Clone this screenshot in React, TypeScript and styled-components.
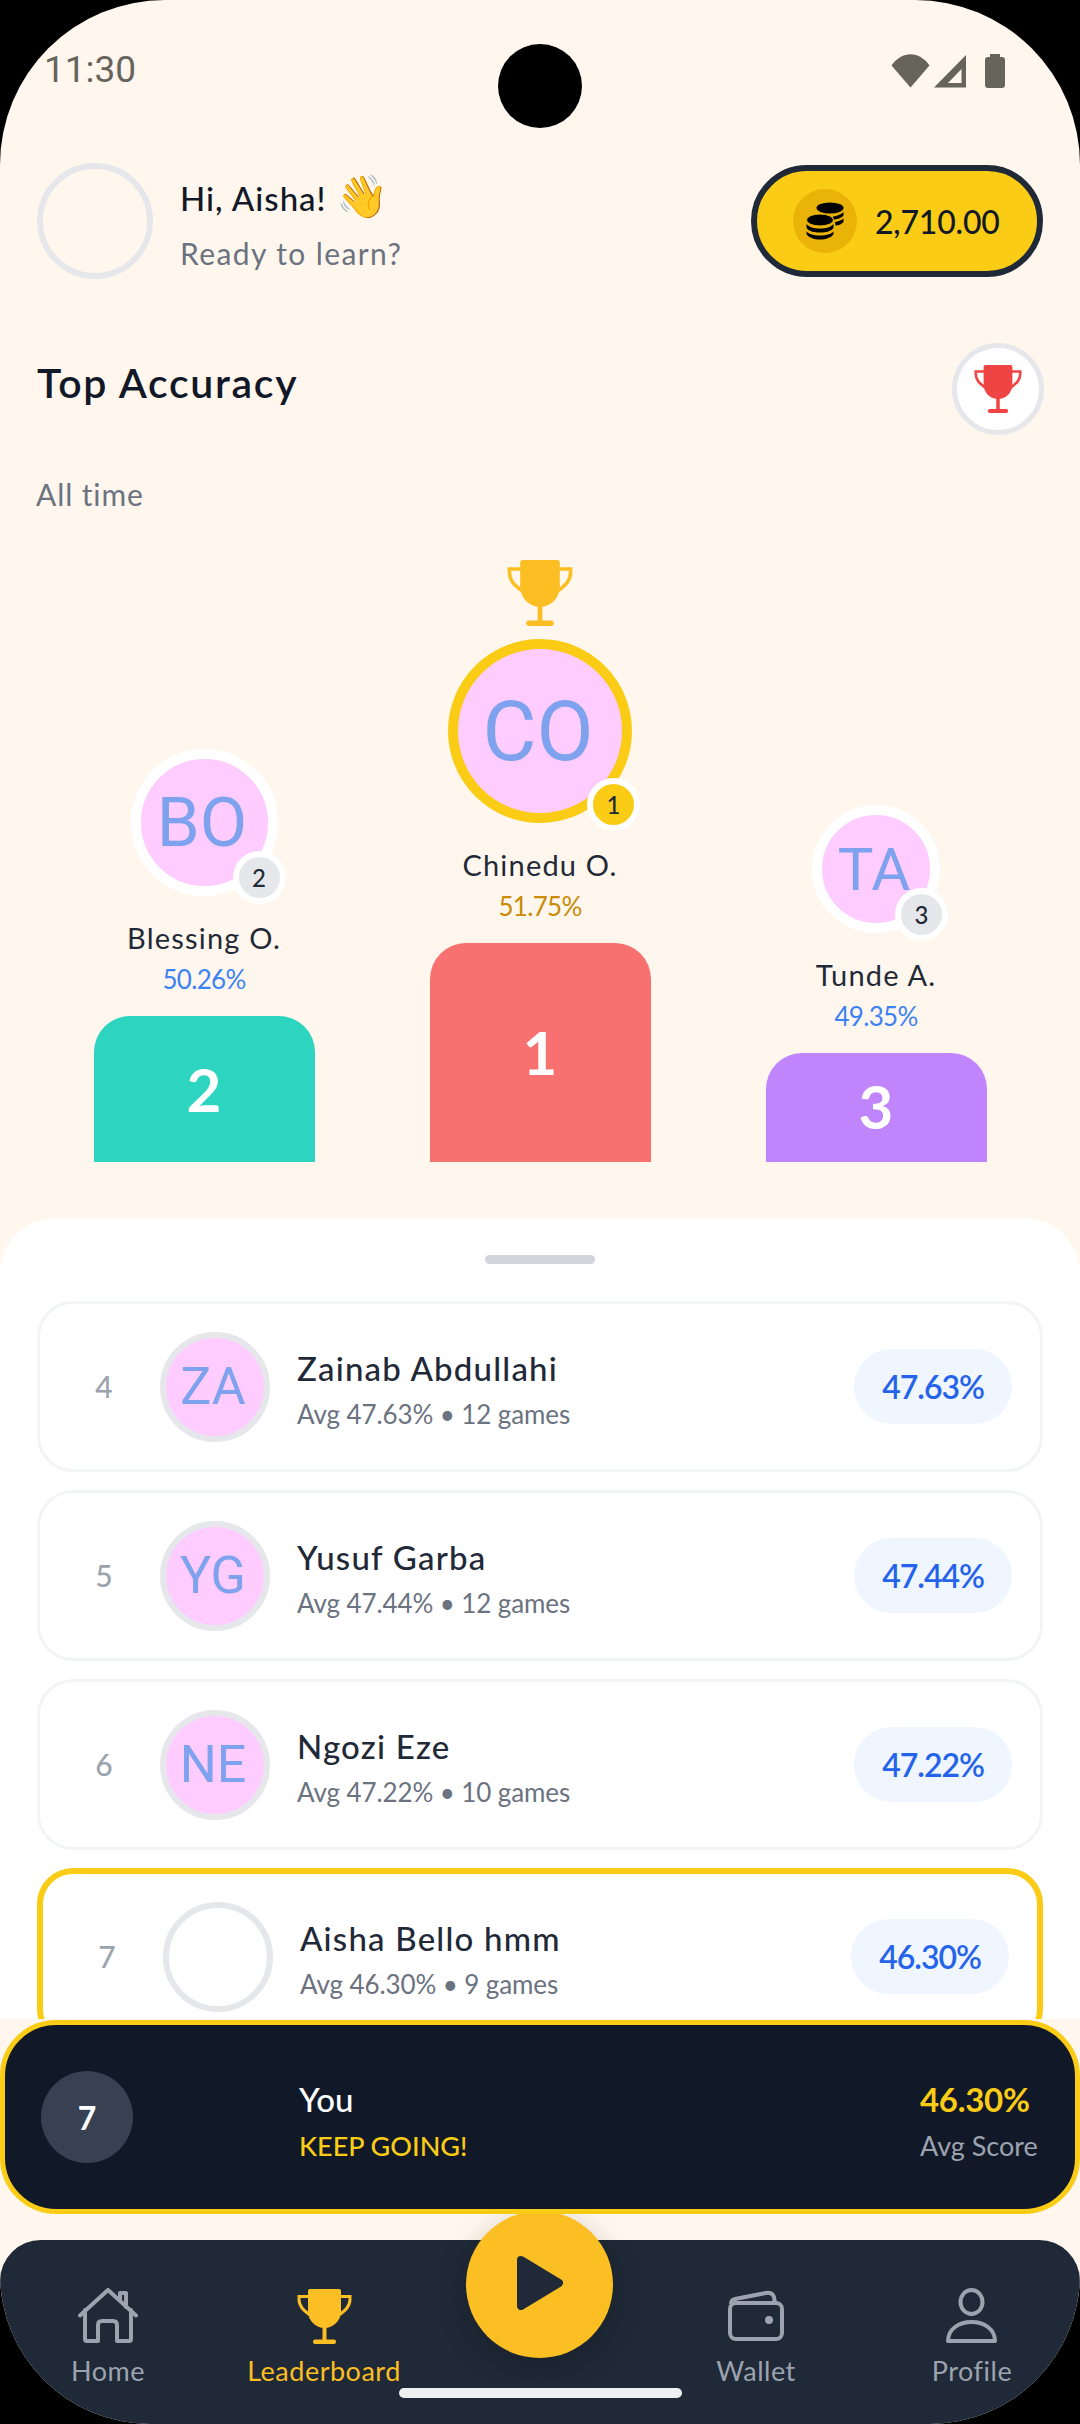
import React from 'react';
import styled, { createGlobalStyle } from 'styled-components';

const CREAM = '#fff7ed';
const NAVY = '#1f2937';
const YELLOW = '#facc15';
const AMBER = '#fbbf24';
const GREY = '#6b7280';
const PINK = '#ffccff';

const podium = [
  { rank: 2, initials: 'BO', name: 'Blessing O.', score: '50.26%', height: 146, color: '#2dd4bf', size: 147, text: 69 },
  { rank: 1, initials: 'CO', name: 'Chinedu O.', score: '51.75%', height: 219, color: '#f87171', size: 184, text: 83 },
  { rank: 3, initials: 'TA', name: 'Tunde A.', score: '49.35%', height: 109, color: '#c084fc', size: 128, text: 60 },
];

const rows = [
  { rank: 4, initials: 'ZA', name: 'Zainab Abdullahi', sub: 'Avg 47.63% • 12 games', score: '47.63%' },
  { rank: 5, initials: 'YG', name: 'Yusuf Garba', sub: 'Avg 47.44% • 12 games', score: '47.44%' },
  { rank: 6, initials: 'NE', name: 'Ngozi Eze', sub: 'Avg 47.22% • 10 games', score: '47.22%' },
  { rank: 7, initials: '', name: 'Aisha Bello hmm', sub: 'Avg 46.30% • 9 games', score: '46.30%', me: true },
];

const TrophyIcon: React.FC<{ size: number; color: string }> = ({ size, color }) => (
  <svg width={size} height={size} viewBox="0 0 55 55" fill="none">
    <path
      fill={color}
      d="M11 2Q11 0 13 0H42Q44 0 44 2V22C44 32 36 39 27.5 39C19 39 11 32 11 22Z"
    />
    <path
      stroke={color}
      strokeWidth="3"
      d="M12 7.5H2V10C2 17 6 21 13 26M43 7.5H53V10C53 17 49 21 42 26"
    />
    <rect x="25.5" y="37" width="4" height="15" fill={color} />
    <rect x="16" y="50.5" width="23" height="4.5" rx="2" fill={color} />
  </svg>
);

const HomeIcon = () => (
  <svg width="60" height="56" viewBox="0 0 60 56" fill="none" stroke="#9ca3af" strokeWidth="4" strokeLinecap="round" strokeLinejoin="round">
    <path d="M2 27.5L30 2L58 27.5" />
    <path d="M7 22V51Q7 53 9 53H20V37Q20 33 24 33H35Q39 33 39 37V53H51Q53 53 53 51V22" />
    <path d="M42 11V5H48V19" />
  </svg>
);

const WalletIcon = () => (
  <svg width="56" height="56" viewBox="0 0 56 56" fill="none" stroke="#9ca3af" strokeWidth="4" strokeLinejoin="round">
    <rect x="2" y="15" width="52" height="36" rx="6" />
    <path d="M3 16Q3 12 7 11L38 5Q44 4 46 9L47 15" />
    <circle cx="41" cy="32" r="4" fill="#9ca3af" stroke="none" />
  </svg>
);

const ProfileIcon = () => (
  <svg width="54" height="56" viewBox="0 0 54 56" fill="none" stroke="#9ca3af" strokeWidth="4" strokeLinejoin="round">
    <ellipse cx="26.5" cy="14" rx="11" ry="12" />
    <path d="M3 53C3 41 14 34 26.5 34C39 34 50 41 50 53Z" />
  </svg>
);

const CoinsIcon = () => (
  <svg width="38" height="38" viewBox="0 0 38 38" fill="#000">
    <ellipse cx="24" cy="6" rx="13.5" ry="5.5" />
    <path d="M27 14.5C31 14 35 12.6 37.5 10V13.5C36 15.5 32 17.2 27.5 17.6Z" />
    <path d="M29 20C32 19.6 35.5 18.4 37.5 16.5V20C36 22 33 23.2 29.5 23.6Z" />
    <ellipse cx="14" cy="18" rx="13.5" ry="6" stroke="#eab308" strokeWidth="1" />
    <path d="M0.5 22C3 25 8 26.6 14 26.6C20 26.6 25 25 27.5 22V26C25.5 29 20 30.6 14 30.6C8 30.6 2.5 29 0.5 26Z" />
    <path d="M0.5 29.5C3 32.2 8 33.6 14 33.6C20 33.6 25 32.2 27.5 29.5V32C25.5 35.6 20 37.5 14 37.5C8 37.5 2.5 35.6 0.5 32Z" />
  </svg>
);

const App: React.FC = () => (
  <>
    <GlobalStyle />
    <Screen>
      <StatusBar>
        <Clock>11:30</Clock>
        <StatusIcons>
          <svg width="39" height="34" viewBox="0 0 39 34" fill="#67645c">
            <path d="M0.5 11.5C11 -3.5 28 -3.5 38.5 11.5L19.5 33.5Z" />
          </svg>
          <svg width="32" height="34" viewBox="0 0 32 34">
            <path d="M0 33.5L32 1V33.5Z" fill="#67645c" />
            <path d="M14 29L27.5 15V29Z" fill={CREAM} />
          </svg>
          <Battery />
        </StatusIcons>
        <Camera />
      </StatusBar>

      <Header>
        <EmptyAvatar />
        <Greeting>
          <Hello>
            Hi, Aisha! <Wave>👋</Wave>
          </Hello>
          <Ready>Ready to learn?</Ready>
        </Greeting>
        <CoinPill>
          <CoinBadge>
            <CoinsIcon />
          </CoinBadge>
          <CoinAmount>2,710.00</CoinAmount>
        </CoinPill>
      </Header>

      <TitleRow>
        <Title>Top Accuracy</Title>
        <TrophyButton>
          <TrophyIcon size={48} color="#ef4444" />
        </TrophyButton>
      </TitleRow>
      <Period>All time</Period>

      <Podium>
        {podium.map((p) => (
          <PodiumColumn key={p.rank}>
            {p.rank === 1 && (
              <CrownTrophy>
                <TrophyIcon size={66} color={AMBER} />
              </CrownTrophy>
            )}
            <AvatarFrame>
              <PodiumAvatar $size={p.size} $text={p.text} $first={p.rank === 1}>
                <Initials>{p.initials}</Initials>
              </PodiumAvatar>
              <RankBadge $first={p.rank === 1}>{p.rank}</RankBadge>
            </AvatarFrame>
            <PodiumName>{p.name}</PodiumName>
            <PodiumScore $first={p.rank === 1}>{p.score}</PodiumScore>
            <Block $height={p.height} $color={p.color}>
              {p.rank}
            </Block>
          </PodiumColumn>
        ))}
      </Podium>

      <Sheet>
        <Handle />
        <List>
          {rows.map((r) => (
            <Row key={r.rank} $me={r.me}>
              <RowRank>{r.rank}</RowRank>
              <RowAvatar $empty={!r.initials}>
                <Initials>{r.initials}</Initials>
              </RowAvatar>
              <RowText>
                <RowName>{r.name}</RowName>
                <RowSub>{r.sub}</RowSub>
              </RowText>
              <ScorePill>{r.score}</ScorePill>
            </Row>
          ))}
        </List>
      </Sheet>

      <YouBar>
        <YouRank>7</YouRank>
        <YouText>
          <YouName>You</YouName>
          <KeepGoing>KEEP GOING!</KeepGoing>
        </YouText>
        <YouScore>
          <YouPercent>46.30%</YouPercent>
          <YouLabel>Avg Score</YouLabel>
        </YouScore>
      </YouBar>

      <Nav>
        <NavItem>
          <NavIcon>
            <HomeIcon />
          </NavIcon>
          <NavLabel>Home</NavLabel>
        </NavItem>
        <NavItem>
          <NavIcon>
            <TrophyIcon size={55} color={AMBER} />
          </NavIcon>
          <NavLabel $active>Leaderboard</NavLabel>
        </NavItem>
        <span />
        <NavItem>
          <NavIcon>
            <WalletIcon />
          </NavIcon>
          <NavLabel>Wallet</NavLabel>
        </NavItem>
        <NavItem>
          <NavIcon>
            <ProfileIcon />
          </NavIcon>
          <NavLabel>Profile</NavLabel>
        </NavItem>
        <PlayButton>
          <svg width="46" height="54" viewBox="0 0 46 54" fill={NAVY} stroke={NAVY} strokeWidth="8" strokeLinejoin="round">
            <path d="M4 4L42 27L4 50Z" />
          </svg>
        </PlayButton>
        <HomeIndicator />
      </Nav>
    </Screen>
  </>
);

const GlobalStyle = createGlobalStyle`
  html, body {
    margin: 0;
    padding: 0;
    background: #000;
  }
  * {
    box-sizing: border-box;
  }
`;

const Screen = styled.div`
  position: relative;
  width: 1080px;
  height: 2424px;
  overflow: hidden;
  display: flex;
  flex-direction: column;
  background: ${CREAM};
  border-radius: 165px 165px 150px 150px;
  font-family: Lato, 'Noto Sans', sans-serif;
  color: #111827;
`;

const StatusBar = styled.div`
  position: relative;
  flex: none;
  height: 163px;
  padding: 50px 75px 0 44px;
  display: flex;
  justify-content: space-between;
  align-items: flex-start;
`;

const Clock = styled.div`
  font-family: Roboto, sans-serif;
  font-size: 37px;
  line-height: 40px;
  color: #67645c;
`;

const StatusIcons = styled.div`
  display: flex;
  align-items: flex-end;
  gap: 4px;
  padding-top: 4px;
`;

const Battery = styled.div`
  position: relative;
  width: 20px;
  height: 31px;
  margin-left: 15px;
  border-radius: 3px;
  background: #67645c;

  &:before {
    content: '';
    position: absolute;
    top: -3px;
    left: 5px;
    width: 10px;
    height: 3px;
    background: #67645c;
  }
`;

const Camera = styled.div`
  position: absolute;
  top: 44px;
  left: 498px;
  width: 84px;
  height: 84px;
  border-radius: 50%;
  background: #000;
`;

const Header = styled.div`
  flex: none;
  display: flex;
  align-items: center;
  padding: 0 37px;
`;

const EmptyAvatar = styled.div`
  width: 116px;
  height: 116px;
  border-radius: 50%;
  border: 6px solid #e5e7eb;
`;

const Greeting = styled.div`
  flex: 1;
  margin-left: 27px;
  padding-top: 5px;
`;

const Hello = styled.div`
  font-size: 33px;
  line-height: 46px;
  font-weight: 500;
  letter-spacing: 1px;
  color: #111827;
`;

const Wave = styled.span`
  font-family: 'Noto Color Emoji', sans-serif;
  font-size: 42px;
  line-height: 44px;
`;

const Ready = styled.div`
  margin-top: 12px;
  font-size: 30px;
  line-height: 40px;
  letter-spacing: 1.4px;
  color: ${GREY};
`;

const CoinPill = styled.div`
  display: flex;
  align-items: center;
  width: 292px;
  height: 112px;
  padding-left: 36px;
  border: 6px solid ${NAVY};
  border-radius: 56px;
  background: ${YELLOW};
`;

const CoinBadge = styled.div`
  width: 64px;
  height: 64px;
  border-radius: 50%;
  background: #eab308;
  display: flex;
  align-items: center;
  justify-content: center;
`;

const CoinAmount = styled.div`
  margin-left: 18px;
  font-size: 32px;
  font-weight: 500;
  letter-spacing: -0.2px;
  color: #111827;
`;

const TitleRow = styled.div`
  flex: none;
  display: flex;
  align-items: center;
  justify-content: space-between;
  margin-top: 64px;
  padding: 0 36px 0 37px;
`;

const Title = styled.div`
  padding-bottom: 14px;
  font-size: 41px;
  font-weight: 600;
  letter-spacing: 1.7px;
  color: #111827;
`;

const TrophyButton = styled.div`
  width: 92px;
  height: 92px;
  border-radius: 50%;
  border: 5px solid #e5e7eb;
  background: #fff;
  display: flex;
  align-items: center;
  justify-content: center;
`;

const Period = styled.div`
  flex: none;
  margin-top: 41px;
  padding-left: 36px;
  font-size: 30px;
  line-height: 36px;
  letter-spacing: 0.9px;
  color: ${GREY};
`;

const Podium = styled.div`
  flex: none;
  display: flex;
  align-items: flex-end;
  justify-content: center;
  gap: 115px;
  margin-top: 48px;
`;

const PodiumColumn = styled.div`
  width: 221px;
  display: flex;
  flex-direction: column;
  align-items: center;
`;

const CrownTrophy = styled.div`
  height: 66px;
  margin-bottom: 13px;
`;

const AvatarFrame = styled.div`
  position: relative;
`;

const PodiumAvatar = styled.div<{ $size: number; $text: number; $first: boolean }>`
  width: ${({ $size }) => $size}px;
  height: ${({ $size }) => $size}px;
  padding-right: 4px;
  border-radius: 50%;
  border: 10px solid ${({ $first }) => ($first ? YELLOW : '#fff')};
  background: ${PINK};
  display: flex;
  align-items: center;
  justify-content: center;
  font-size: ${({ $text }) => $text}px;
`;

const Initials = styled.span`
  font-family: Roboto, sans-serif;
  color: #7ea2ee;
  filter: blur(0.7px);
`;

const RankBadge = styled.div<{ $first: boolean }>`
  position: absolute;
  right: -8px;
  bottom: -8px;
  width: 53px;
  height: 53px;
  border-radius: 50%;
  border: 6px solid #fff;
  background: ${({ $first }) => ($first ? YELLOW : '#e5e7eb')};
  display: flex;
  align-items: center;
  justify-content: center;
  font-size: 24px;
  font-weight: 500;
  color: ${NAVY};
`;

const PodiumName = styled.div`
  margin-top: 24px;
  font-size: 29px;
  line-height: 36px;
  letter-spacing: 1.2px;
  color: ${NAVY};
`;

const PodiumScore = styled.div<{ $first: boolean }>`
  margin-top: 7px;
  font-size: 26px;
  line-height: 32px;
  letter-spacing: -0.7px;
  color: ${({ $first }) => ($first ? '#ca8a04' : '#3b82f6')};
`;

const Block = styled.div<{ $height: number; $color: string }>`
  width: 221px;
  height: ${({ $height }) => $height}px;
  margin-top: 21px;
  padding-top: ${({ $height }) => ($height > 200 ? 74 : $height > 120 ? 38 : 18)}px;
  border-radius: 36px 36px 0 0;
  background: ${({ $color }) => $color};
  text-align: center;
  font-size: 60px;
  line-height: 70px;
  font-weight: 700;
  color: #fff;
`;

const Sheet = styled.div`
  flex: none;
  height: 801px;
  margin-top: 56px;
  padding: 37px 37px 0;
  overflow: hidden;
  background: #fff;
  border-radius: 56px 56px 0 0;
`;

const Handle = styled.div`
  width: 110px;
  height: 9px;
  margin: 0 auto;
  border-radius: 5px;
  background: #d1d5db;
`;

const List = styled.div`
  display: flex;
  flex-direction: column;
  gap: 18px;
  margin-top: 37px;
`;

const Row = styled.div<{ $me?: boolean }>`
  box-sizing: content-box;
  flex: none;
  height: 165px;
  display: flex;
  align-items: center;
  padding: 0 28px 0 34px;
  border: ${({ $me }) => ($me ? `6px solid ${YELLOW}` : '3px solid #f3f4f6')};
  border-radius: 36px;
  background: #fff;
`;

const RowRank = styled.div`
  width: 60px;
  padding-bottom: 2px;
  text-align: center;
  font-size: 30px;
  font-weight: 500;
  color: #9ca3af;
`;

const RowAvatar = styled.div<{ $empty: boolean }>`
  width: 110px;
  height: 110px;
  margin-left: 26px;
  padding-right: 4px;
  border-radius: 50%;
  border: 6px solid #e5e7eb;
  background: ${({ $empty }) => ($empty ? '#fff' : PINK)};
  display: flex;
  align-items: center;
  justify-content: center;
  font-size: 52px;
`;

const RowText = styled.div`
  flex: 1;
  margin-left: 27px;
  padding-top: 4px;
`;

const RowName = styled.div`
  font-size: 33px;
  line-height: 42px;
  font-weight: 500;
  letter-spacing: 1.2px;
  color: ${NAVY};
`;

const RowSub = styled.div`
  margin-top: 9px;
  font-size: 26px;
  line-height: 32px;
  letter-spacing: -0.1px;
  color: ${GREY};
`;

const ScorePill = styled.div`
  height: 75px;
  padding: 0 28px;
  border-radius: 38px;
  background: #eff6ff;
  display: flex;
  align-items: center;
  font-size: 32px;
  font-weight: 600;
  letter-spacing: -1px;
  color: #2563eb;
`;

const YouBar = styled.div`
  position: relative;
  z-index: 2;
  flex: none;
  height: 194px;
  margin-top: 1px;
  display: flex;
  align-items: center;
  padding: 0 37px 0 36px;
  border: 5px solid ${YELLOW};
  border-radius: 56px;
  background: #111827;
`;

const YouRank = styled.div`
  width: 92px;
  height: 92px;
  border-radius: 50%;
  background: #374151;
  display: flex;
  align-items: center;
  justify-content: center;
  font-size: 32px;
  font-weight: 700;
  color: #fff;
`;

const YouText = styled.div`
  flex: 1;
  margin-left: 166px;
  padding-top: 6px;
`;

const YouName = styled.div`
  font-size: 33px;
  line-height: 42px;
  font-weight: 500;
  color: #fff;
`;

const KeepGoing = styled.div`
  margin-top: 10px;
  font-size: 27px;
  line-height: 32px;
  font-weight: 500;
  color: ${YELLOW};
`;

const YouScore = styled.div`
  width: 118px;
  padding-top: 6px;
`;

const YouPercent = styled.div`
  font-size: 33px;
  line-height: 42px;
  font-weight: 700;
  letter-spacing: -0.3px;
  color: ${YELLOW};
`;

const YouLabel = styled.div`
  margin-top: 10px;
  font-size: 27px;
  line-height: 32px;
  white-space: nowrap;
  color: #9ca3af;
`;

const Nav = styled.div`
  position: relative;
  flex: none;
  height: 184px;
  margin-top: 26px;
  display: grid;
  grid-template-columns: repeat(5, 216px);
  padding-top: 48px;
  border-radius: 41px 41px 0 0;
  background: ${NAVY};
`;

const NavItem = styled.div`
  display: flex;
  flex-direction: column;
  align-items: center;
`;

const NavIcon = styled.div`
  height: 56px;
  display: flex;
  align-items: center;
  justify-content: center;
`;

const NavLabel = styled.div<{ $active?: boolean }>`
  margin-top: 11px;
  font-size: 27px;
  line-height: 32px;
  letter-spacing: 0.5px;
  color: ${({ $active }) => ($active ? AMBER : '#9ca3af')};
`;

const PlayButton = styled.div`
  position: absolute;
  top: -29px;
  left: 466px;
  width: 147px;
  height: 147px;
  padding-bottom: 3px;
  border-radius: 50%;
  background: ${AMBER};
  box-shadow: 0 8px 30px rgba(0, 0, 0, 0.2);
  display: flex;
  align-items: center;
  justify-content: center;
`;

const HomeIndicator = styled.div`
  position: absolute;
  left: 399px;
  bottom: 26px;
  width: 283px;
  height: 10px;
  border-radius: 5px;
  background: #eeeff0;
`;

export default App;
